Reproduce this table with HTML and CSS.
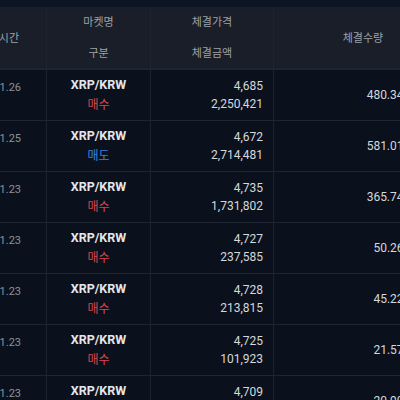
FILE: index.html
```html
<!DOCTYPE html>
<html lang="ko">
<head>
<meta charset="utf-8">
<link rel="stylesheet" href="styles.css">
</head>
<body>
<div class="topbar"></div>
<div class="table">
  <div class="row head">
    <div class="cell c-time"><span>체결시간</span></div>
    <div class="cell c-market"><span>마켓명</span><span>구분</span></div>
    <div class="cell c-price"><span>체결가격</span><span>체결금액</span></div>
    <div class="cell c-qty"><span>체결수량</span></div>
  </div>
  <div class="row">
    <div class="cell c-time"><span>2024.01.26</span></div>
    <div class="cell c-market"><span class="pair">XRP/KRW</span><span class="buy">매수</span></div>
    <div class="cell c-price"><span>4,685</span><span>2,250,421</span></div>
    <div class="cell c-qty"><span>480.34599786</span></div>
  </div>
  <div class="row">
    <div class="cell c-time"><span>2024.01.25</span></div>
    <div class="cell c-market"><span class="pair">XRP/KRW</span><span class="sell">매도</span></div>
    <div class="cell c-price"><span>4,672</span><span>2,714,481</span></div>
    <div class="cell c-qty"><span>581.01048801</span></div>
  </div>
  <div class="row">
    <div class="cell c-time"><span>2024.01.23</span></div>
    <div class="cell c-market"><span class="pair">XRP/KRW</span><span class="buy">매수</span></div>
    <div class="cell c-price"><span>4,735</span><span>1,731,802</span></div>
    <div class="cell c-qty"><span>365.74487856</span></div>
  </div>
  <div class="row">
    <div class="cell c-time"><span>2024.01.23</span></div>
    <div class="cell c-market"><span class="pair">XRP/KRW</span><span class="buy">매수</span></div>
    <div class="cell c-price"><span>4,727</span><span>237,585</span></div>
    <div class="cell c-qty"><span>50.26126507</span></div>
  </div>
  <div class="row">
    <div class="cell c-time"><span>2024.01.23</span></div>
    <div class="cell c-market"><span class="pair">XRP/KRW</span><span class="buy">매수</span></div>
    <div class="cell c-price"><span>4,728</span><span>213,815</span></div>
    <div class="cell c-qty"><span>45.22313875</span></div>
  </div>
  <div class="row">
    <div class="cell c-time"><span>2024.01.23</span></div>
    <div class="cell c-market"><span class="pair">XRP/KRW</span><span class="buy">매수</span></div>
    <div class="cell c-price"><span>4,725</span><span>101,923</span></div>
    <div class="cell c-qty"><span>21.57100529</span></div>
  </div>
  <div class="row">
    <div class="cell c-time"><span>2024.01.23</span></div>
    <div class="cell c-market"><span class="pair">XRP/KRW</span><span class="buy">매수</span></div>
    <div class="cell c-price"><span>4,709</span><span>98,430</span></div>
    <div class="cell c-qty"><span>20.90252707</span></div>
  </div>
</div>
</body>
</html>
```

FILE: styles.css
```css
html, body {
  margin: 0;
  padding: 0;
  width: 400px;
  height: 400px;
  overflow: hidden;
  background: #0a111c;
  font-family: Roboto, "Noto Sans CJK KR", sans-serif;
}

.topbar {
  height: 7px;
  background: #0b1523;
}

.table {
  width: 505px;
  margin-left: -53px;
}

.row {
  display: grid;
  grid-template-columns: 100px 104px 123px 178px;
  height: 51px;
  box-sizing: border-box;
  border-bottom: 1px solid #1d2631;
}

.row.head {
  height: 63px;
  background: #1a1e29;
  border-bottom: 2px solid #1b2634;
}

.cell {
  display: flex;
  flex-direction: column;
  justify-content: center;
  box-sizing: border-box;
  border-right: 1px solid #1a232e;
  min-width: 0;
  white-space: nowrap;
}

.head .cell {
  border-right: 1px solid #1f2430;
  color: #9ea2aa;
  font-size: 11px;
  line-height: 31px;
}

.c-time {
  align-items: flex-end;
  padding-right: 25px;
  color: #8c9199;
  font-size: 11px;
  justify-content: flex-start;
  padding-top: 10px;
  line-height: 15px;
}

.head .c-time {
  justify-content: center;
  padding-top: 0;
  padding-right: 27px;
  color: #9ea2aa;
  font-size: 11px;
}

.c-market {
  align-items: center;
  line-height: 21px;
}

.pair {
  color: #e4e6ea;
  font-weight: 700;
  font-size: 12.5px;
}

.buy {
  color: #d9464f;
  font-size: 12px;
}

.sell {
  color: #3a82e6;
  font-size: 12px;
}

.c-price {
  align-items: flex-end;
  padding-right: 10px;
  color: #d5d8dc;
  font-size: 12px;
  line-height: 18.5px;
}

.head .c-price {
  align-items: center;
  padding-right: 0;
}

.c-qty {
  align-items: flex-end;
  padding-right: 8px;
  color: #d5d8dc;
  font-size: 12px;
  border-right: none;
}

.head .c-qty {
  align-items: center;
  padding-right: 0;
  border-right: none;
}
```
